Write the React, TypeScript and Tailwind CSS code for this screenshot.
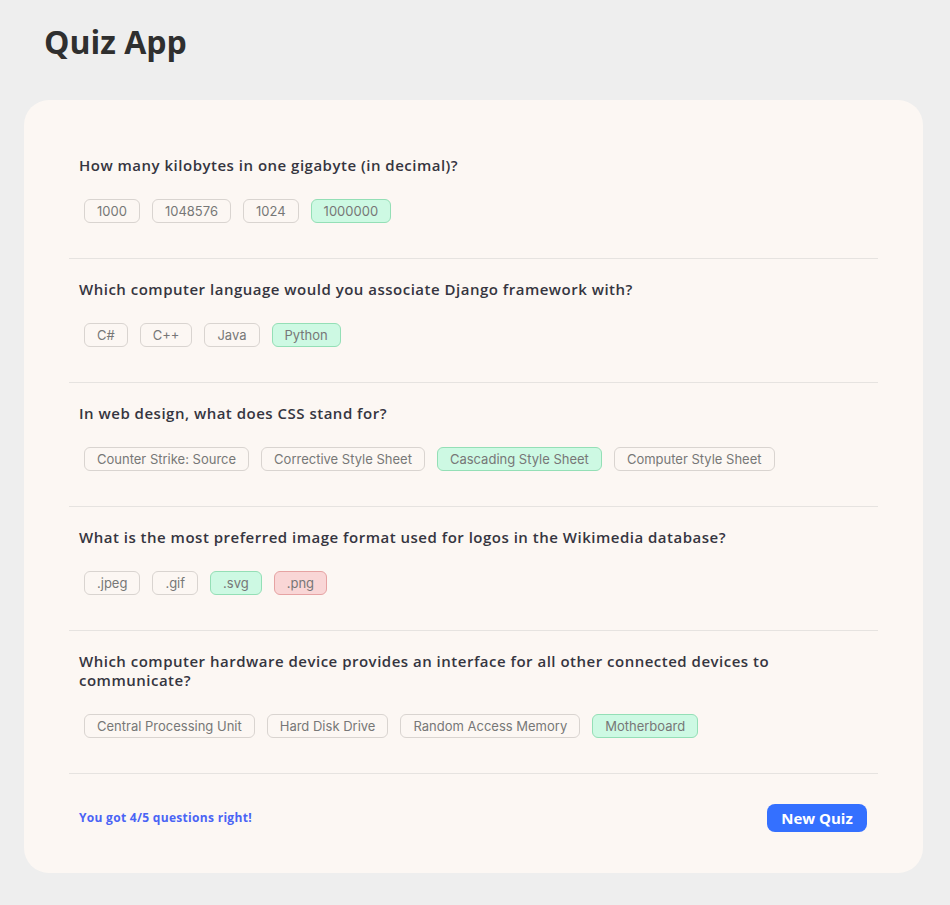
import React from "react";

type Q = { q: string; answers: { t: string; s?: "ok" | "bad" }[] };

const questions: Q[] = [
  {
    q: "How many kilobytes in one gigabyte (in decimal)?",
    answers: [{ t: "1000" }, { t: "1048576" }, { t: "1024" }, { t: "1000000", s: "ok" }],
  },
  {
    q: "Which computer language would you associate Django framework with?",
    answers: [{ t: "C#" }, { t: "C++" }, { t: "Java" }, { t: "Python", s: "ok" }],
  },
  {
    q: "In web design, what does CSS stand for?",
    answers: [
      { t: "Counter Strike: Source" },
      { t: "Corrective Style Sheet" },
      { t: "Cascading Style Sheet", s: "ok" },
      { t: "Computer Style Sheet" },
    ],
  },
  {
    q: "What is the most preferred image format used for logos in the Wikimedia database?",
    answers: [{ t: ".jpeg" }, { t: ".gif" }, { t: ".svg", s: "ok" }, { t: ".png", s: "bad" }],
  },
  {
    q: "Which computer hardware device provides an interface for all other connected devices to communicate?",
    answers: [
      { t: "Central Processing Unit" },
      { t: "Hard Disk Drive" },
      { t: "Random Access Memory" },
      { t: "Motherboard", s: "ok" },
    ],
  },
];

function Pill({ t, s }: { t: string; s?: "ok" | "bad" }) {
  const cls =
    s === "ok"
      ? "bg-[#cdf9e3] border-[#94dfb6]"
      : s === "bad"
      ? "bg-[#f9d6d6] border-[#e6a3a3]"
      : "bg-transparent border-[#d9d4d0]";
  return (
    <span
      className={`h-[24px] px-[12px] flex items-center rounded-[6px] border text-[13px] text-[#777777] leading-none ${cls}`}
      style={{ fontFamily: "Inter, sans-serif" }}
    >
      {t}
    </span>
  );
}

export default function App() {
  return (
    <div className="min-h-[905px] bg-[#eeeeee] pt-[22px] pb-[33px] pl-[24px] pr-[27px]" style={{ fontFamily: "'Open Sans', sans-serif" }}>
      <h1 className="pl-[20px] text-[32px] font-bold text-[#2f2f2f] leading-[40px]">Quiz App</h1>
      <div className="mt-[38px] bg-[#fcf7f3] rounded-[25px] px-[45px] pt-[35px] pb-[41px]">
        {questions.map((qq, i) => (
          <div key={i} className="border-b border-[#e6e3e0] pt-[21px] pb-[35px]">
            <div className="pl-[10px] pr-[80px] text-[15px] leading-[19px] font-semibold tracking-[0.5px] text-[#353540]">{qq.q}</div>
            <div className="mt-[24px] pl-[15px] flex gap-[12px]">
              {qq.answers.map((a, j) => (
                <Pill key={j} t={a.t} s={a.s} />
              ))}
            </div>
          </div>
        ))}
        <div className="flex items-center justify-between pt-[30px] pl-[10px] pr-[11px]">
          <span className="text-[12px] font-bold tracking-[0.3px] text-[#4a64f5]">You got 4/5 questions right!</span>
          <button className="h-[28px] w-[100px] rounded-[8px] bg-[#3470ff] text-white text-[15px] font-bold">New Quiz</button>
        </div>
      </div>
    </div>
  );
}
